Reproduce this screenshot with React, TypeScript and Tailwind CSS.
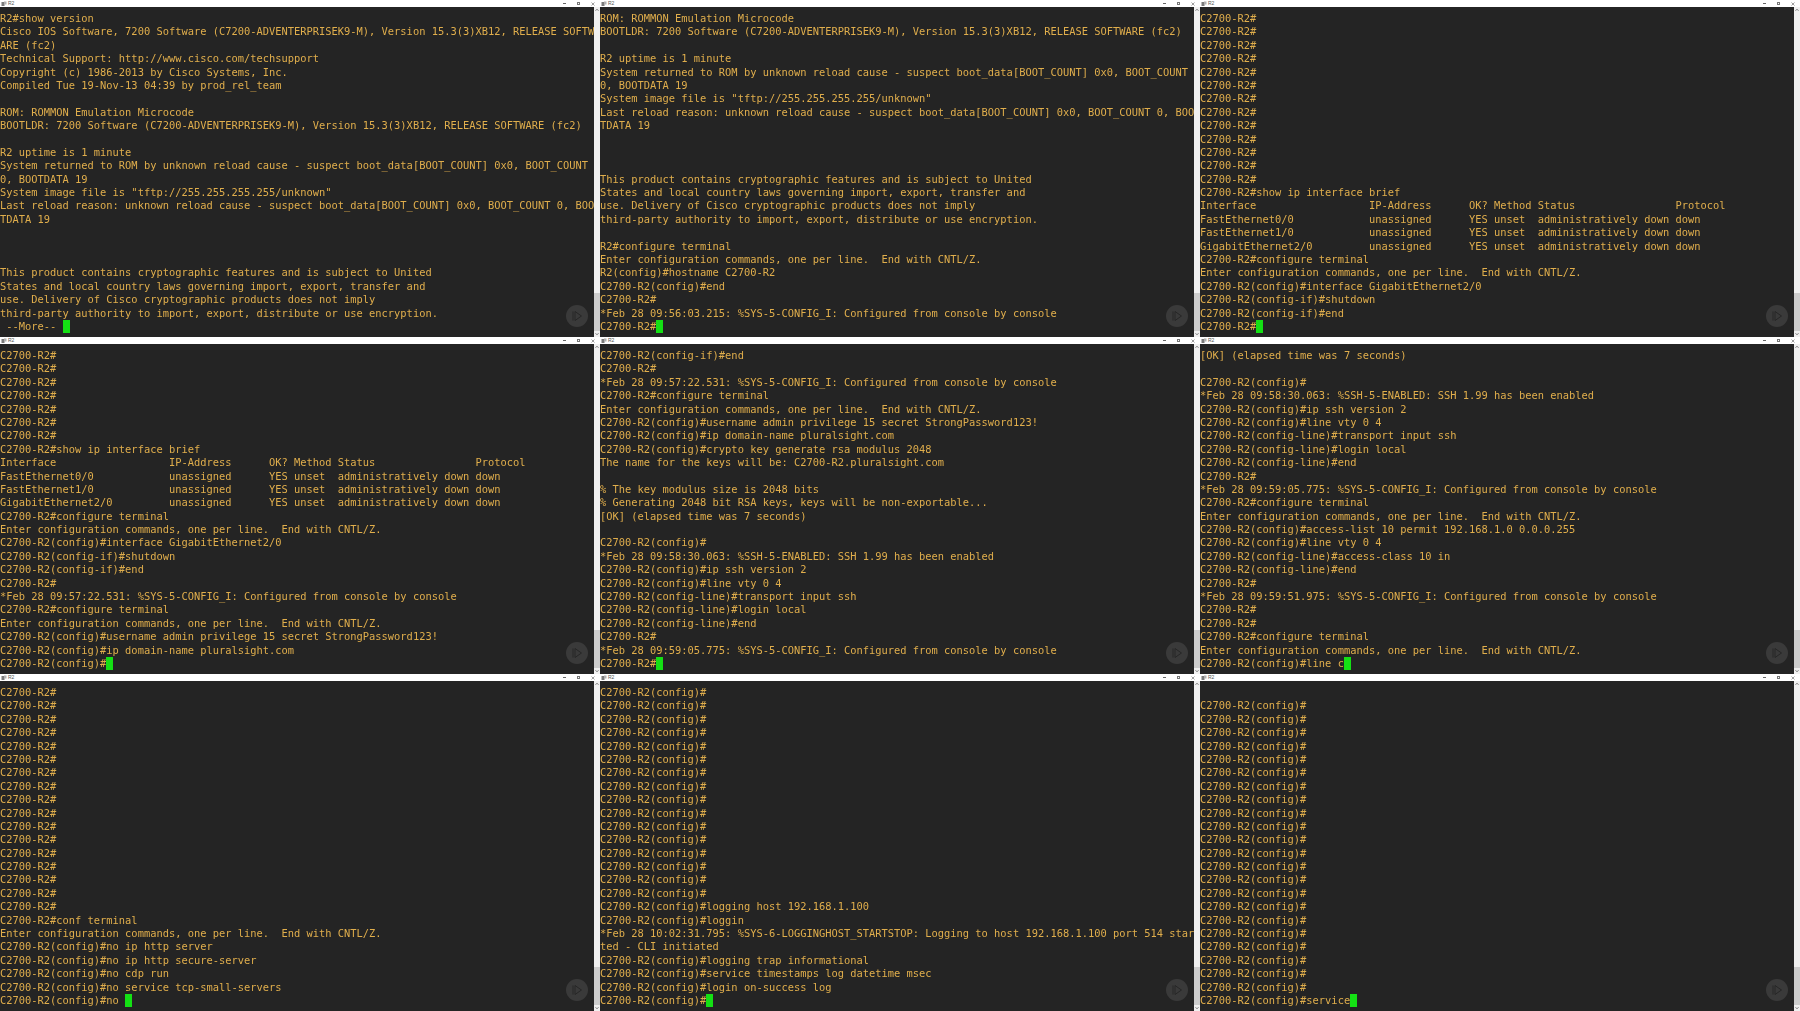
const prompt = 'C2700-R2#';
const cfg = 'C2700-R2(config)#';
const line = 'C2700-R2(config-line)#';
const ifc = 'C2700-R2(config-if)#';
const enter = 'Enter configuration commands, one per line.  End with CNTL/Z.';

const rep = (s: string, n: number) => Array.from({ length: n }, () => s);

const ipBrief = [
  'C2700-R2#show ip interface brief',
  'Interface                  IP-Address      OK? Method Status                Protocol',
  'FastEthernet0/0            unassigned      YES unset  administratively down down',
  'FastEthernet1/0            unassigned      YES unset  administratively down down',
  'GigabitEthernet2/0         unassigned      YES unset  administratively down down',
  'C2700-R2#configure terminal',
  enter,
  cfg + 'interface GigabitEthernet2/0',
  ifc + 'shutdown',
  ifc + 'end',
];

const panels: { lines: string[]; cursor: string }[] = [
  {
    lines: [
      'R2#show version',
      'Cisco IOS Software, 7200 Software (C7200-ADVENTERPRISEK9-M), Version 15.3(3)XB12, RELEASE SOFTW',
      'ARE (fc2)',
      'Technical Support: http://www.cisco.com/techsupport',
      'Copyright (c) 1986-2013 by Cisco Systems, Inc.',
      'Compiled Tue 19-Nov-13 04:39 by prod_rel_team',
      '',
      'ROM: ROMMON Emulation Microcode',
      'BOOTLDR: 7200 Software (C7200-ADVENTERPRISEK9-M), Version 15.3(3)XB12, RELEASE SOFTWARE (fc2)',
      '',
      'R2 uptime is 1 minute',
      'System returned to ROM by unknown reload cause - suspect boot_data[BOOT_COUNT] 0x0, BOOT_COUNT',
      '0, BOOTDATA 19',
      'System image file is "tftp://255.255.255.255/unknown"',
      'Last reload reason: unknown reload cause - suspect boot_data[BOOT_COUNT] 0x0, BOOT_COUNT 0, BOO',
      'TDATA 19',
      '',
      '',
      '',
      'This product contains cryptographic features and is subject to United',
      'States and local country laws governing import, export, transfer and',
      'use. Delivery of Cisco cryptographic products does not imply',
      'third-party authority to import, export, distribute or use encryption.',
    ],
    cursor: ' --More-- ',
  },
  {
    lines: [
      'ROM: ROMMON Emulation Microcode',
      'BOOTLDR: 7200 Software (C7200-ADVENTERPRISEK9-M), Version 15.3(3)XB12, RELEASE SOFTWARE (fc2)',
      '',
      'R2 uptime is 1 minute',
      'System returned to ROM by unknown reload cause - suspect boot_data[BOOT_COUNT] 0x0, BOOT_COUNT',
      '0, BOOTDATA 19',
      'System image file is "tftp://255.255.255.255/unknown"',
      'Last reload reason: unknown reload cause - suspect boot_data[BOOT_COUNT] 0x0, BOOT_COUNT 0, BOO',
      'TDATA 19',
      '',
      '',
      '',
      'This product contains cryptographic features and is subject to United',
      'States and local country laws governing import, export, transfer and',
      'use. Delivery of Cisco cryptographic products does not imply',
      'third-party authority to import, export, distribute or use encryption.',
      '',
      'R2#configure terminal',
      enter,
      'R2(config)#hostname C2700-R2',
      cfg + 'end',
      prompt,
      '*Feb 28 09:56:03.215: %SYS-5-CONFIG_I: Configured from console by console',
    ],
    cursor: prompt,
  },
  {
    lines: [...rep(prompt, 13), ...ipBrief],
    cursor: prompt,
  },
  {
    lines: [
      ...rep(prompt, 7),
      ...ipBrief,
      prompt,
      '*Feb 28 09:57:22.531: %SYS-5-CONFIG_I: Configured from console by console',
      'C2700-R2#configure terminal',
      enter,
      cfg + 'username admin privilege 15 secret StrongPassword123!',
      cfg + 'ip domain-name pluralsight.com',
    ],
    cursor: cfg,
  },
  {
    lines: [
      ifc + 'end',
      prompt,
      '*Feb 28 09:57:22.531: %SYS-5-CONFIG_I: Configured from console by console',
      'C2700-R2#configure terminal',
      enter,
      cfg + 'username admin privilege 15 secret StrongPassword123!',
      cfg + 'ip domain-name pluralsight.com',
      cfg + 'crypto key generate rsa modulus 2048',
      'The name for the keys will be: C2700-R2.pluralsight.com',
      '',
      '% The key modulus size is 2048 bits',
      '% Generating 2048 bit RSA keys, keys will be non-exportable...',
      '[OK] (elapsed time was 7 seconds)',
      '',
      cfg,
      '*Feb 28 09:58:30.063: %SSH-5-ENABLED: SSH 1.99 has been enabled',
      cfg + 'ip ssh version 2',
      cfg + 'line vty 0 4',
      line + 'transport input ssh',
      line + 'login local',
      line + 'end',
      prompt,
      '*Feb 28 09:59:05.775: %SYS-5-CONFIG_I: Configured from console by console',
    ],
    cursor: prompt,
  },
  {
    lines: [
      '[OK] (elapsed time was 7 seconds)',
      '',
      cfg,
      '*Feb 28 09:58:30.063: %SSH-5-ENABLED: SSH 1.99 has been enabled',
      cfg + 'ip ssh version 2',
      cfg + 'line vty 0 4',
      line + 'transport input ssh',
      line + 'login local',
      line + 'end',
      prompt,
      '*Feb 28 09:59:05.775: %SYS-5-CONFIG_I: Configured from console by console',
      'C2700-R2#configure terminal',
      enter,
      cfg + 'access-list 10 permit 192.168.1.0 0.0.0.255',
      cfg + 'line vty 0 4',
      line + 'access-class 10 in',
      line + 'end',
      prompt,
      '*Feb 28 09:59:51.975: %SYS-5-CONFIG_I: Configured from console by console',
      prompt,
      prompt,
      'C2700-R2#configure terminal',
      enter,
    ],
    cursor: cfg + 'line c',
  },
  {
    lines: [
      ...rep(prompt, 17),
      'C2700-R2#conf terminal',
      enter,
      cfg + 'no ip http server',
      cfg + 'no ip http secure-server',
      cfg + 'no cdp run',
      cfg + 'no service tcp-small-servers',
    ],
    cursor: cfg + 'no ',
  },
  {
    lines: [
      ...rep(cfg, 16),
      cfg + 'logging host 192.168.1.100',
      cfg + 'loggin',
      '*Feb 28 10:02:31.795: %SYS-6-LOGGINGHOST_STARTSTOP: Logging to host 192.168.1.100 port 514 star',
      'ted - CLI initiated',
      cfg + 'logging trap informational',
      cfg + 'service timestamps log datetime msec',
      cfg + 'login on-success log',
    ],
    cursor: cfg,
  },
  {
    lines: ['', ...rep(cfg, 22)],
    cursor: cfg + 'service',
  },
];

function TitleBar() {
  return (
    <div className="h-[7px] bg-white flex items-center pl-[1px] pr-[5px] text-[#555555] text-[5px] leading-[7px] overflow-hidden">
      <svg width="6" height="6" viewBox="0 0 6 6" className="shrink-0">
        <rect x="0.5" y="1" width="3" height="4" fill="#7a7a7a" />
        <rect x="3" y="0.5" width="2.5" height="3" fill="#b0b0b0" />
      </svg>
      <span className="ml-[1px] font-['Liberation_Sans',sans-serif]">R2</span>
      <div className="ml-auto flex items-center gap-[11px]">
        <span className="w-[3px] h-[1px] bg-[#666666]"></span>
        <span className="w-[3px] h-[3px] border border-[#777777]"></span>
        <svg width="4" height="4" viewBox="0 0 4 4">
          <path d="M0.5 0.5 3.5 3.5M3.5 0.5 0.5 3.5" stroke="#777777" strokeWidth="0.7" />
        </svg>
      </div>
    </div>
  );
}

function PlayButton() {
  return (
    <div className="absolute right-[6px] bottom-[10px] w-[22px] h-[22px] rounded-full bg-[#3a3a3a] flex items-center justify-center">
      <svg width="12" height="12" viewBox="0 0 12 12" fill="none" stroke="#262626" strokeWidth="1">
        <path d="M2 1.5v9" />
        <path d="M4 1.5 10.5 6 4 10.5Z" />
      </svg>
    </div>
  );
}

function Scrollbar() {
  return (
    <div className="w-[6px] shrink-0 bg-[#f0f0f0] flex flex-col">
      <svg width="6" height="6" viewBox="0 0 6 6" className="shrink-0">
        <path d="M1.5 3.8 3 2.2 4.5 3.8" fill="none" stroke="#606060" strokeWidth="0.8" />
      </svg>
      <div className="mt-auto h-[38px] bg-[#cdcdcd]"></div>
      <svg width="6" height="6" viewBox="0 0 6 6" className="shrink-0">
        <path d="M1.5 2.2 3 3.8 4.5 2.2" fill="none" stroke="#606060" strokeWidth="0.8" />
      </svg>
    </div>
  );
}

function Terminal({ lines, cursor }: { lines: string[]; cursor: string }) {
  return (
    <div className="h-[337px] min-w-0 flex flex-col">
      <TitleBar />
      <div className="flex-1 min-h-0 flex">
        <div className="relative flex-1 min-w-0 bg-[#242424] overflow-hidden pt-[5px] text-[#e0ae4c] text-[10.4px] leading-[13.4px] font-['DejaVu_Sans_Mono',monospace] blur-[0.3px]">
          {lines.map((l, i) => (
            <div key={i} className="h-[13.4px] whitespace-pre">
              {l}
            </div>
          ))}
          <div className="h-[13.4px] whitespace-pre flex">
            <span>{cursor}</span>
            <span className="w-[7px] h-[13px] bg-[#14e014]"></span>
          </div>
          <PlayButton />
        </div>
        <Scrollbar />
      </div>
    </div>
  );
}

export default function App() {
  return (
    <div className="w-[1800px] h-[1011px] bg-white grid grid-cols-3 overflow-hidden">
      {panels.map((p, i) => (
        <Terminal key={i} lines={p.lines} cursor={p.cursor} />
      ))}
    </div>
  );
}
